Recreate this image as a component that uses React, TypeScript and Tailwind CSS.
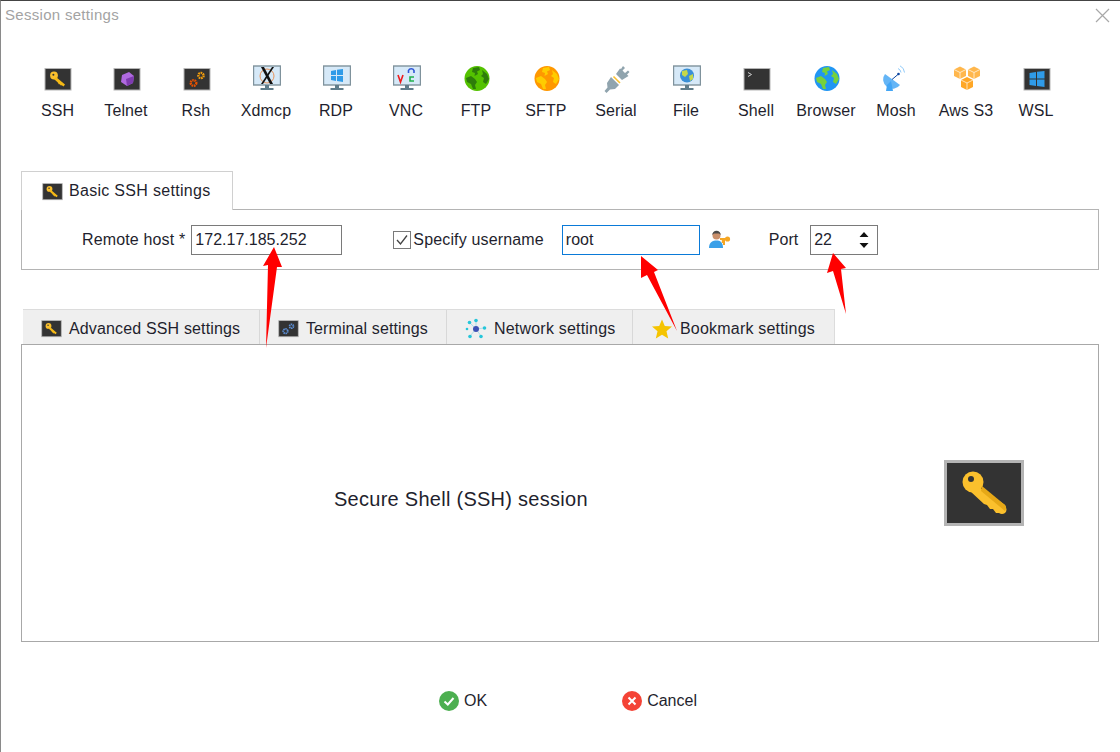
import React from "react";

type IconProps = { size?: number };

const KeyGlyph = () => (
  <g>
    <circle cx="10" cy="10.5" r="3.9" fill="#fbc02d" />
    <path d="M12 12 L21 19.5 L19.5 21.5 L17.8 20.2 L16.8 20.6 L15.8 19.2 L14.8 19.2 L13.8 17.4 L10 14 Z" fill="#f5b916" />
    <circle cx="9.4" cy="9.8" r="1" fill="#333333" />
  </g>
);

const DarkBox = ({ children }: { children?: React.ReactNode }) => (
  <g>
    <rect x="1" y="3.5" width="26" height="21.5" fill="#333333" stroke="#b5b5b5" strokeWidth="1" />
    {children}
  </g>
);

const Monitor = ({ children }: { children?: React.ReactNode }) => (
  <g>
    <rect x="0.5" y="1" width="27" height="19" fill="#d6e9f8" stroke="#7f929c" strokeWidth="1.4" />
    <rect x="12" y="20" width="4" height="3" fill="#607d8b" />
    <rect x="7.5" y="23" width="13" height="2" fill="#607d8b" />
    {children}
  </g>
);

const Globe = ({ sea, land }: { sea: string; land: string }) => (
  <g>
    <circle cx="14" cy="13.5" r="12.5" fill={sea} />
    <path d="M10 3 L16 2 L17 5 L14 6.5 L15 9 L11.5 11 L12 8 L9 7 Z" fill={land} />
    <path d="M3 13 L8 11 L12 14 L14 17 L12 20 L13 24 L10 24 L8 19 L4 17 Z" fill={land} />
    <path d="M19 5 L24 9 L26 14 L23 19 L20 17 L21 13 L18 11 L20 9 Z" fill={land} />
  </g>
);

const Svg = ({ children, size = 28 }: IconProps & { children: React.ReactNode }) => (
  <svg width={size} height={size} viewBox="0 0 28 28">
    {children}
  </svg>
);

const SshIcon = ({ size }: IconProps) => (
  <Svg size={size}>
    <DarkBox>
      <KeyGlyph />
    </DarkBox>
  </Svg>
);

const TerminalGears = ({ size }: IconProps) => (
  <Svg size={size}>
    <rect x="1" y="3.5" width="26" height="21.5" fill="#333333" stroke="#b5b5b5" />
    <circle cx="10" cy="17.5" r="3" fill="none" stroke="#5c8fd6" strokeWidth="2.4" strokeDasharray="1.8 0.7" />
    <circle cx="18" cy="11" r="2.6" fill="none" stroke="#5c8fd6" strokeWidth="2.4" strokeDasharray="1.8 0.7" />
  </Svg>
);

const WinTiles = ({ x, y, fill, s }: { x: number; y: number; fill: string; s: number }) => (
  <g fill={fill}>
    <path d={`M${x} ${y + 1}L${x + s} ${y}V${y + s}H${x}Z`} />
    <path d={`M${x + s + 1} ${y - 0.2}L${x + 2 * s + 2} ${y - 1}V${y + s}H${x + s + 1}Z`} />
    <path d={`M${x} ${y + s + 1}H${x + s}V${y + 2 * s + 1}L${x} ${y + 2 * s}Z`} />
    <path d={`M${x + s + 1} ${y + s + 1}H${x + 2 * s + 2}V${y + 2 * s + 2}L${x + s + 1} ${y + 2 * s + 1}Z`} />
  </g>
);

const protocols: { label: string; icon: React.ReactNode }[] = [
  { label: "SSH", icon: <SshIcon /> },
  {
    label: "Telnet",
    icon: (
      <Svg>
        <DarkBox>
          <path d="M9 10 L16 7 L21 11 L20 18 L14 21 L8 17 Z" fill="#b06ae0" />
          <path d="M13 14 L21 11 L20 18 L14 21 Z" fill="#7e3bb0" />
        </DarkBox>
      </Svg>
    ),
  },
  {
    label: "Rsh",
    icon: (
      <Svg>
        <DarkBox>
          <circle cx="10.5" cy="18" r="2.8" fill="none" stroke="#e65100" strokeWidth="2.4" strokeDasharray="1.6 0.7" />
          <circle cx="18" cy="10.5" r="2.6" fill="none" stroke="#f59e0b" strokeWidth="2.4" strokeDasharray="1.6 0.7" />
        </DarkBox>
      </Svg>
    ),
  },
  {
    label: "Xdmcp",
    icon: (
      <Svg>
        <Monitor>
          <circle cx="14" cy="11" r="7" fill="none" stroke="#e8935a" strokeWidth="1" />
          <path d="M8 2 H11 L20 19 H17 Z" fill="#111111" />
          <path d="M19 2 H21 L10 19 H8 Z" fill="#111111" />
        </Monitor>
      </Svg>
    ),
  },
  {
    label: "RDP",
    icon: (
      <Svg>
        <Monitor>
          <WinTiles x={8} y={5} fill="#2f9be8" s={5} />
        </Monitor>
      </Svg>
    ),
  },
  {
    label: "VNC",
    icon: (
      <Svg>
        <Monitor>
          <path d="M5 10 L7.5 17 L10 10" fill="none" stroke="#ef1c1c" strokeWidth="1.6" />
          <path d="M15.5 8 V5.5 A3 3 0 0 1 21 5.5 V8" fill="none" stroke="#2f55d6" strokeWidth="1.6" />
          <path d="M21 12 H17 V16 H21" fill="none" stroke="#22b14c" strokeWidth="1.6" />
        </Monitor>
      </Svg>
    ),
  },
  { label: "FTP", icon: <Svg><Globe sea="#54c200" land="#2e7d0a" /></Svg> },
  { label: "SFTP", icon: <Svg><Globe sea="#ff9800" land="#ffcc00" /></Svg> },
  {
    label: "Serial",
    icon: (
      <Svg>
        <path d="M20 1 L22 3 L19.5 5.5 L22 8 L25 5.5 L26.5 7 L24 9.5 L25.5 11 L19 15 L13 9 L17 3.5 L18 4 Z" fill="#90a4ae" />
        <path d="M13 13 L9.5 9.5 M16 16 L12.5 12.5" stroke="#fbc02d" strokeWidth="1.6" transform="translate(1 2)" />
        <path d="M8 12 L16 20 L12 24 L7 24.5 L3.5 28 L1.5 26 L4.5 22.5 L4 18 Z" fill="#90a4ae" />
      </Svg>
    ),
  },
  {
    label: "File",
    icon: (
      <Svg>
        <Monitor>
          <circle cx="14" cy="10.5" r="7" fill="#3a8fd6" />
          <path d="M9 6 L14 5 L15 9 L12 12 L9 10 Z M16 11 L20 9 L20 14 L17 16 Z" fill="#c5d84a" />
        </Monitor>
      </Svg>
    ),
  },
  {
    label: "Shell",
    icon: (
      <Svg>
        <DarkBox>
          <path d="M5 7.5 L8.5 9.5 L5 11.5" fill="none" stroke="#d0d0d0" strokeWidth="1" />
        </DarkBox>
      </Svg>
    ),
  },
  { label: "Browser", icon: <Svg><Globe sea="#2196f3" land="#76d13d" /></Svg> },
  {
    label: "Mosh",
    icon: (
      <Svg>
        <path d="M2 9 L17 20 A9 9 0 0 1 2 9 Z" fill="#64b5f6" />
        <path d="M4 20 L8 16 L10 26 H3 Z" fill="#42a5f5" />
        <path d="M9 14.5 L15.5 9" stroke="#0d47a1" strokeWidth="1" />
        <circle cx="15.5" cy="9" r="1.3" fill="#0d47a1" />
        <path d="M18 7.5 A5 5 0 0 0 15 3.5 M21.5 7.5 A8 8 0 0 0 17 0.8" fill="none" stroke="#90caf9" strokeWidth="1" />
      </Svg>
    ),
  },
  {
    label: "Aws S3",
    icon: (
      <Svg>
        <path d="M1 4.5 L7 1.5 L13 4.5 V11 L7 14 L1 11 Z" fill="#ffb74d" />
        <path d="M15 4.5 L21 1.5 L27 4.5 V11 L21 14 L15 11 Z" fill="#ffb74d" />
        <path d="M8 15 L14 12 L20 15 V22 L14 25 L8 22 Z" fill="#ffa726" />
        <path d="M1 4.5 L7 7.5 L13 4.5 M7 7.5 V14 M15 4.5 L21 7.5 L27 4.5 M21 7.5 V14 M8 15 L14 18 L20 15 M14 18 V25" fill="none" stroke="#fff3e0" strokeWidth="0.8" />
      </Svg>
    ),
  },
  {
    label: "WSL",
    icon: (
      <Svg>
        <DarkBox>
          <WinTiles x={6.5} y={7} fill="#2f9be8" s={6.5} />
        </DarkBox>
      </Svg>
    ),
  },
];

const Star = () => (
  <svg width="20" height="20" viewBox="0 0 20 20">
    <path d="M10 0.5 L12.8 7 L20 7.6 L14.5 12.3 L16.2 19.5 L10 15.7 L3.8 19.5 L5.5 12.3 L0 7.6 L7.2 7 Z" fill="#f5c400" />
  </svg>
);

const NetworkIcon = () => (
  <svg width="22" height="22" viewBox="0 0 22 22">
    <path d="M11 11 L5 5 M11 11 L11 3 M11 11 L19 10 M11 11 L5 18 M11 11 L16 18" stroke="#9fd8e8" strokeWidth="0.8" />
    <circle cx="11" cy="11" r="3" fill="#3f51b5" />
    <circle cx="4.5" cy="4.5" r="1.8" fill="#26c6da" />
    <circle cx="11" cy="2.5" r="1.8" fill="#26c6da" />
    <circle cx="19.5" cy="10" r="1.8" fill="#26c6da" />
    <circle cx="2" cy="11" r="1.3" fill="#26c6da" />
    <circle cx="5" cy="18.5" r="1.8" fill="#26c6da" />
    <circle cx="16" cy="18.5" r="1.8" fill="#26c6da" />
  </svg>
);

const UserKey = () => (
  <svg width="22" height="20" viewBox="0 0 22 20">
    <circle cx="7.5" cy="5.5" r="4" fill="#c98f6b" />
    <path d="M3.2 5 A4.3 4.3 0 0 1 11.8 5 L10 3.5 L5 3.5 Z" fill="#4a4a4a" />
    <path d="M0 18 C0 12 4 10.5 7.5 10.5 C11 10.5 14 12 14 18 Z" fill="#3aa0e8" />
    <circle cx="18.5" cy="9" r="2.6" fill="#f5a623" />
    <path d="M11 8 H18 V10 H16 V15 H14 V13 H12.8 V10 H11 Z" fill="#f5a623" />
  </svg>
);

const settingsTabs: { label: string; icon: React.ReactNode; width: string; pad: string }[] = [
  { label: "Advanced SSH settings", icon: <SshIcon size={21} />, width: "w-[237px]", pad: "pl-[18px] gap-[7px] tracking-[0.15px]" },
  { label: "Terminal settings", icon: <TerminalGears size={21} />, width: "w-[187px]", pad: "pl-[18px] gap-[7px] tracking-[0.1px]" },
  { label: "Network settings", icon: <NetworkIcon />, width: "w-[186px]", pad: "pl-[18px] gap-[7px] tracking-[0.2px]" },
  { label: "Bookmark settings", icon: <Star />, width: "w-[201px]", pad: "pl-[19px] gap-[8px] tracking-[0.2px]" },
];

export default function App() {
  return (
    <div className="relative w-[1120px] h-[752px] overflow-hidden bg-white border-l border-[#8a8a8a] border-t border-t-[#444444] font-['Liberation_Sans',Arial,sans-serif] text-[16px] text-[#1f1f2e]">
      {/* title bar */}
      <div className="flex items-center justify-between h-[29px] pl-[4px] pr-[10px]">
        <span className="text-[15px] tracking-[0.3px] text-[#a3a3a3]">Session settings</span>
        <svg width="15" height="15" viewBox="0 0 15 15">
          <path d="M1 1 L14 14 M14 1 L1 14" stroke="#a8a8a8" strokeWidth="1.2" />
        </svg>
      </div>

      {/* session types */}
      <div className="flex pl-[22px] pt-[35px]">
        {protocols.map((p) => (
          <div key={p.label} className="flex flex-col items-center w-[70px] first:w-[69px]">
            {p.icon}
            <span className={`mt-[8px] leading-[20px] whitespace-nowrap tracking-[0.1px] ${p.label === "SSH" ? "" : "mr-[2px]"}`}>{p.label}</span>
          </div>
        ))}
      </div>

      {/* basic settings */}
      <div className="ml-[20px] mt-[50px] w-[1078px]">
        <div className="relative z-10 flex items-center gap-[6px] w-[212px] h-[39px] -mb-px pl-[20px] bg-white border border-b-0 border-[#d0d0d0] tracking-[0.3px]">
          <SshIcon size={21} />
          <span>Basic SSH settings</span>
        </div>
        <div className="flex items-center h-[61px] pl-[60px] border border-[#b4b4b4]">
          <span className="tracking-[0.15px]">Remote host *</span>
          <input readOnly value="172.17.185.252" className="ml-[6px] w-[151px] h-[30px] px-[3px] border border-[#7a7a7a] outline-none" />
          <span className="ml-[51px] flex items-center justify-center w-[18px] h-[18px] border border-[#7a7a7a]">
            <svg width="14" height="14" viewBox="0 0 14 14">
              <path d="M2 7 L5.5 11 L12 2.5" fill="none" stroke="#444444" strokeWidth="1.3" />
            </svg>
          </span>
          <span className="ml-[2px] tracking-[0.15px]">Specify username</span>
          <input readOnly value="root" className="ml-[18px] w-[138px] h-[30px] px-[3px] border border-[#0a7ad8] outline-none" />
          <span className="ml-[9px] flex"><UserKey /></span>
          <span className="ml-[38px]">Port</span>
          <div className="ml-[12px] flex items-center justify-between w-[68px] h-[30px] pl-[3px] pr-[8px] border border-[#7a7a7a]">
            <span>22</span>
            <svg width="10" height="20" viewBox="0 0 10 20">
              <path d="M5 2 L9.5 7 H0.5 Z M0.5 13 H9.5 L5 18 Z" fill="#111111" />
            </svg>
          </div>
        </div>
      </div>

      {/* advanced tabs */}
      <div className="ml-[20px] mt-[39px] w-[1078px]">
        <div className="flex h-[35px] ml-[2px] w-[812px] bg-[#efefef] border-t border-r border-[#dcdcdc]">
          {settingsTabs.map((t) => (
            <div key={t.label} className={`flex items-center pt-[3px] ${t.width} ${t.pad} border-r border-[#d8d8d8] last:border-r-0`}>
              {t.icon}
              <span className="whitespace-nowrap">{t.label}</span>
            </div>
          ))}
        </div>
        <div className="flex items-center h-[298px] border border-[#a8a8a8]">
          <span className="ml-[312px] mt-[12px] text-[20px] tracking-[0.27px]">Secure Shell (SSH) session</span>
          <svg width="80" height="66" viewBox="0 0 80 66" className="ml-[356px]">
            <rect x="1.5" y="1.5" width="77" height="63" fill="#333333" stroke="#b4b4b4" strokeWidth="3" />
            <g transform="translate(1 -3)">
              <circle cx="28" cy="25" r="10.5" fill="#fbc02d" />
              <path d="M31 28 L60 48 Q63 53 60 56 Q57 58 54 56 L51 56 L48 52 L45 52 L42 48 L39 47 L25 34 Z" fill="#fbc02d" />
              <path d="M37 29 L60 48 Q62 51 60 54 L36 34 Z" fill="#e6a817" />
              <circle cx="26" cy="22" r="3" fill="#333333" />
            </g>
          </svg>
        </div>
      </div>

      {/* buttons */}
      <div className="flex items-center mt-[47px] ml-[438px]">
        <svg width="20" height="20" viewBox="0 0 20 20">
          <circle cx="10" cy="10" r="10" fill="#4caf50" />
          <path d="M5.5 10.5 L8.8 13.5 L14.5 7" fill="none" stroke="#ffffff" strokeWidth="2" />
        </svg>
        <span className="ml-[5px]">OK</span>
        <svg width="20" height="20" viewBox="0 0 20 20" className="ml-[135px]">
          <circle cx="10" cy="10" r="10" fill="#f44336" />
          <path d="M6.5 6.5 L13.5 13.5 M13.5 6.5 L6.5 13.5" stroke="#ffffff" strokeWidth="2" />
        </svg>
        <span className="ml-[5px]">Cancel</span>
      </div>

      {/* red annotation arrows */}
      <svg width="1120" height="752" viewBox="0 0 1120 752" className="absolute -left-px -top-px z-20 pointer-events-none">
        <path d="M274 247 L282 267 L277 267 L266 348 L268 265 L263 266 Z" fill="#ff0000" />
        <path d="M641 256 L658 270 L654 272 L677 331 L647 275 L641 278 Z" fill="#ff0000" />
        <path d="M833 253 L846 268 L841 269 L846 314 L833 271 L827 273 Z" fill="#ff0000" />
      </svg>
    </div>
  );
}
